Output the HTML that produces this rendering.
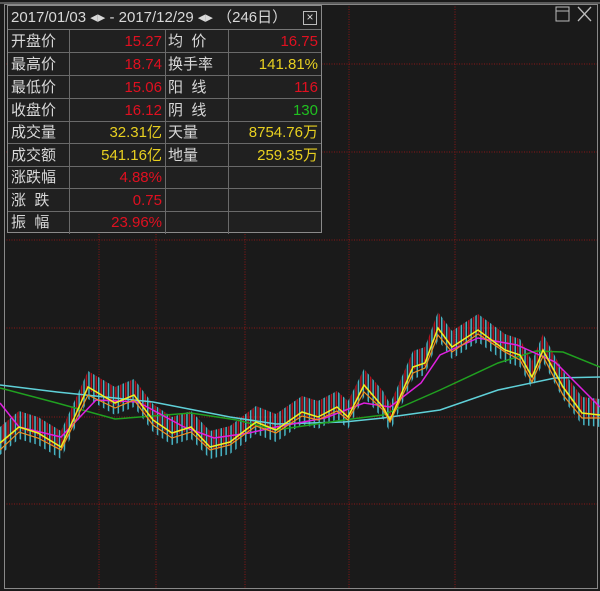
<!DOCTYPE html>
<html><head><meta charset="utf-8"><style>
body{margin:0;background:#1a1a1a;width:600px;height:591px;overflow:hidden;position:relative;font-family:"Liberation Sans","Noto Sans CJK SC",sans-serif}
svg{position:absolute;left:0;top:0}
#tb{position:absolute;left:7px;top:5px;width:315px;height:228px;background:#202020;border:1px solid #8a8a8a;box-sizing:border-box}
.hd{position:absolute;left:0;top:0;width:313px;height:24px;color:#d8d8d8;font-size:15px;line-height:24px;padding-left:3px;box-sizing:border-box;border-bottom:1px solid #777;white-space:nowrap}
.c{position:absolute;font-size:15px;white-space:nowrap}
.l{color:#d8d8d8;padding-left:3px}
.r{text-align:right;padding-right:3px;box-sizing:border-box}
.red{color:#e01020}.yel{color:#e8d020}.grn{color:#20c020}
</style></head><body>
<svg width="600" height="591" xmlns="http://www.w3.org/2000/svg">
<defs>
<pattern id="pc" patternUnits="userSpaceOnUse" width="4.9" height="40"><rect x="0" y="0" width="1.5" height="40" fill="#46b4c4"/></pattern>
<pattern id="pr" patternUnits="userSpaceOnUse" width="4.9" height="40"><rect x="2.45" y="0" width="1.5" height="40" fill="#b8101e"/></pattern>
</defs>
<g stroke="#8a1616" stroke-width="1" stroke-dasharray="1,1.5" fill="none">
<line x1="4" y1="64" x2="598" y2="64"/><line x1="4" y1="152" x2="598" y2="152"/><line x1="4" y1="240" x2="598" y2="240"/><line x1="4" y1="328" x2="598" y2="328"/><line x1="4" y1="417" x2="598" y2="417"/><line x1="4" y1="504" x2="598" y2="504"/>
<line x1="99" y1="4" x2="99" y2="588"/><line x1="156" y1="4" x2="156" y2="588"/><line x1="245" y1="4" x2="245" y2="588"/><line x1="349" y1="4" x2="349" y2="588"/><line x1="455" y1="4" x2="455" y2="588"/>
</g>
<rect x="4.5" y="4.5" width="593" height="584" fill="none" stroke="#888" stroke-width="1"/>
<line x1="0" y1="3" x2="600" y2="3" stroke="#999"/>
<rect x="556" y="7" width="13" height="14" fill="none" stroke="#bbb"/><line x1="556" y1="11" x2="569" y2="11" stroke="#bbb"/>
<path d="M578 7 L591 21 M591 7 L578 21" stroke="#bbb" stroke-width="1.3"/>
<polygon id="band" fill="url(#pc)" points="0,427 19,411 38,417 61,431 88,371 115,387 134,379 153,404 172,417 191,411 210,431 230,426 256,406 276,414 302,396 318,401 337,391 348,401 364,369 383,391 390,404 413,351 425,347 438,312 452,331 478,314 505,334 520,339 532,361 543,334 563,371 582,397 600,399 600,427 582,425 563,399 543,362 532,389 520,367 505,362 478,342 452,359 438,340 425,375 413,379 390,432 383,419 364,397 348,429 337,419 318,429 302,424 276,442 256,434 230,454 210,459 191,439 172,445 153,432 134,407 115,415 88,399 61,459 38,445 19,439 0,455"/>
<polygon fill="url(#pr)" transform="translate(0,-4) scale(1,1)" points="0,431 19,415 38,421 61,435 88,375 115,391 134,383 153,408 172,421 191,415 210,435 230,430 256,410 276,418 302,400 318,405 337,395 348,405 364,373 383,395 390,408 413,355 425,351 438,316 452,335 478,318 505,338 520,343 532,365 543,338 563,375 582,401 600,403 600,422 582,420 563,394 543,357 532,384 520,362 505,357 478,337 452,354 438,335 425,370 413,374 390,427 383,414 364,392 348,424 337,414 318,424 302,419 276,437 256,429 230,449 210,454 191,434 172,440 153,427 134,402 115,410 88,394 61,454 38,440 19,434 0,450"/>
<g fill="none" stroke-width="1.5">
<polyline stroke="#5fd0d8" points="0,385 57,392 153,402 230,417 276,424 344,422 383,418 440,410 498,390 555,378 600,377"/>
<polyline stroke="#20a020" points="0,388 57,403 115,419 191,413 237,420 276,430 344,420 383,415 440,390 498,363 536,351 563,352 600,367"/>
<polyline stroke="#e020e0" points="0,403 19,427 61,437 96,400 138,402 184,427 214,438 249,433 276,427 325,418 364,403 390,407 421,383 440,355 478,338 517,345 555,362 600,407"/>
<polyline stroke="#f0f020" points="0,443 19,427 38,433 61,447 88,387 115,403 134,395 153,420 172,433 191,427 210,447 230,442 256,422 276,430 302,412 318,417 337,407 348,417 364,385 383,407 390,420 413,367 425,363 438,328 452,347 478,330 505,350 520,355 532,377 543,350 563,387 582,413 600,415"/>
<polyline stroke="#f09020" stroke-width="1.2" points="0,450 19,432 38,438 61,450 88,395 115,408 134,400 153,425 172,438 191,432 210,450 230,445 256,426 276,433 302,416 318,420 337,411 348,420 364,392 383,410 390,422 413,373 425,368 438,335 452,352 478,334 505,352 520,360 532,382 543,356 563,395 582,418 600,418"/>
</g>
</svg>
<div id="tb">
<div class="hd">2017/01/03 ◂▸ - 2017/12/29 ◂▸ （246日）<span style="position:absolute;left:295px;top:5px;width:12px;height:12px;border:1px solid #bbb;font-size:12px;line-height:11px;text-align:center">×</span></div>
</div>
<script>
try{
var tb=document.getElementById('tb');
var rows=[["开盘价","15.27","red","均  价","16.75","red"],["最高价","18.74","red","换手率","141.81%","yel"],["最低价","15.06","red","阳  线","116","red"],["收盘价","16.12","red","阴  线","130","grn"],["成交量","32.31亿","yel","天量","8754.76万","yel"],["成交额","541.16亿","yel","地量","259.35万","yel"],["涨跌幅","4.88%","red","","",""],["涨  跌","0.75","red","","",""],["振  幅","23.96%","red","","",""]];
var ys=[24,47,70,93,116,138,161,183,206,228];
var h='';
for(var i=0;i<9;i++){var y=ys[i],hh=ys[i+1]-y;var r=rows[i];
h+='<div class="c l" style="left:0;top:'+y+'px;width:61px;line-height:'+hh+'px">'+r[0].replace(/ /g,'&nbsp;')+'</div>';
h+='<div class="c r '+r[2]+'" style="left:61px;top:'+y+'px;width:96px;line-height:'+hh+'px">'+r[1]+'</div>';
h+='<div class="c l" style="left:157px;top:'+y+'px;width:63px;line-height:'+hh+'px">'+r[3].replace(/ /g,'&nbsp;')+'</div>';
h+='<div class="c r '+r[5]+'" style="left:220px;top:'+y+'px;width:93px;line-height:'+hh+'px">'+r[4]+'</div>';
if(i<8)h+='<div style="position:absolute;left:0;top:'+(ys[i+1]-1)+'px;width:313px;height:1px;background:#6a6a6a"></div>';}
[61,157,220].forEach(function(x){h+='<div style="position:absolute;left:'+x+'px;top:24px;width:1px;height:204px;background:#6a6a6a"></div>';});
tb.insertAdjacentHTML('beforeend',h);
}catch(e){}
</script>
</body></html>
